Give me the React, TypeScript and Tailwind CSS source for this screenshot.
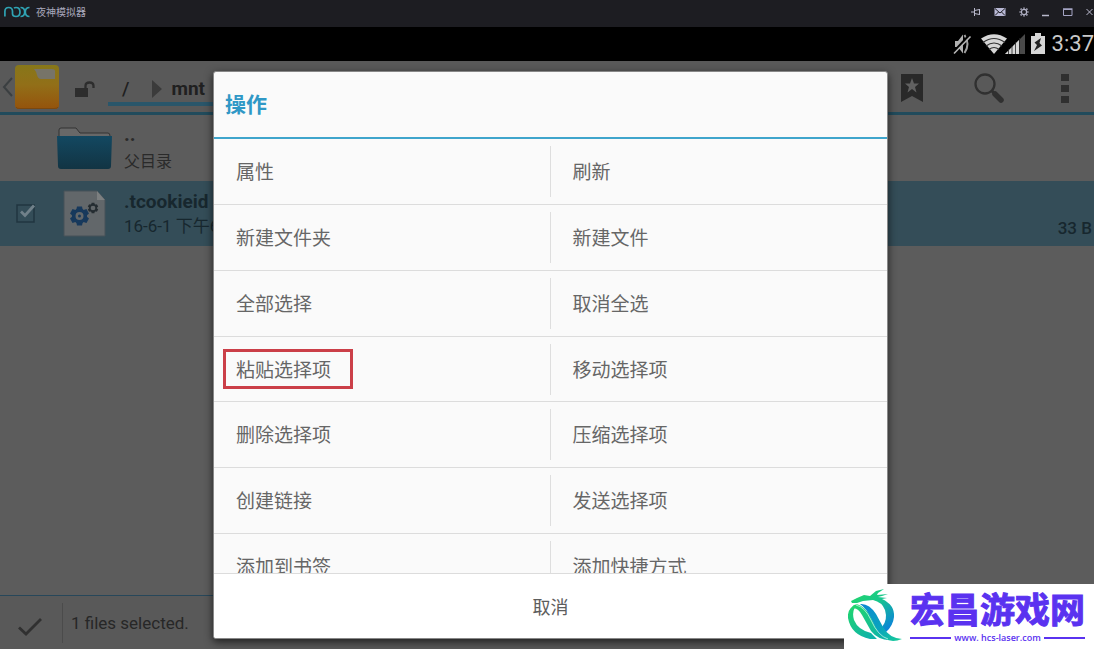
import React from "react";

const actions: [string, string][] = [
  ["属性", "刷新"],
  ["新建文件夹", "新建文件"],
  ["全部选择", "取消全选"],
  ["粘贴选择项", "移动选择项"],
  ["删除选择项", "压缩选择项"],
  ["创建链接", "发送选择项"],
  ["添加到书签", "添加快捷方式"],
];

const HIGHLIGHTED = "粘贴选择项";

function NoxLogo() {
  return (
    <svg viewBox="0 0 26 12" className="h-3 w-[26px]" fill="none" stroke="#2fa3b3" strokeWidth="1.7">
      <path d="M0.900 10.500V5.500Q0.900 1.500 4.700 1.500T8.500 5.500V8Q8.700 10.500 12 10.500Q16 10.500 16 6T12 1.500Q10.800 1.500 10 2.200" />
      <path d="M16.500 1.500Q20.700 1.500 20.700 6T16.500 10.500M25.500 1.500Q21.300 1.500 21.300 6T25.500 10.500" />
    </svg>
  );
}

function PinIcon() {
  return (
    <svg viewBox="0 0 10 10" className="size-[10px]" fill="none" stroke="#b9b9cc">
      <path d="M0 5H3.500M3.500 1V9M3.500 3.500L8.500 2.500M3.500 6.500L8.500 7.500M8.500 2V8" />
    </svg>
  );
}

function MailIcon() {
  return (
    <svg viewBox="0 0 12 10" className="h-[10px] w-3">
      <path d="M0.500 1H11.500V9H0.500Z" fill="#b9b9d6" />
      <path d="M1 1.500L6 6L11 1.500M1 8.500L4.500 5M11 8.500L7.500 5" fill="none" stroke="#1d1d22" />
    </svg>
  );
}

function SunGearIcon() {
  return (
    <svg viewBox="0 0 10 10" className="size-[10px]" fill="none" stroke="#b4b4c8">
      <circle cx="5" cy="5" r="2.600" strokeWidth="1.200" />
      <path d="M5 0.500V1.700M5 8.300V9.500M0.500 5H1.700M8.300 5H9.500M1.600 1.600L2.600 2.600M7.400 7.400L8.400 8.400M8.400 1.600L7.400 2.600M2.600 7.400L1.600 8.400" strokeWidth="1.500" />
    </svg>
  );
}

function TitleBar() {
  return (
    <header className="flex h-[27px] shrink-0 items-center justify-between bg-[#1d1d22] pb-[3px] pl-1">
      <div className="flex items-center gap-[6px]">
        <NoxLogo />
        <span className="text-[10px] leading-3 text-[#a9a9bd]">夜神模拟器</span>
      </div>
      <div className="flex shrink-0 items-center gap-[13px]">
        <button aria-label="置顶"><PinIcon /></button>
        <button aria-label="消息"><MailIcon /></button>
        <button aria-label="设置"><SunGearIcon /></button>
        <button aria-label="最小化">
          <svg viewBox="0 0 8 10" className="h-[10px] w-2"><path d="M0 8.500H7" stroke="#b9b9cc" strokeWidth="1.500" /></svg>
        </button>
        <button aria-label="最大化">
          <svg viewBox="0 0 10 10" className="size-[10px]" fill="none" stroke="#a5a5c4"><path d="M0.500 2.500H9V8.500H0.500Z" /><path d="M0 2H9.500" strokeWidth="1.500" /></svg>
        </button>
        <button aria-label="关闭">
          <svg viewBox="0 0 8 10" className="h-[10px] w-2" stroke="#b9b9cc"><path d="M0.500 2L6.500 8M6.500 2L0.500 8" /></svg>
        </button>
      </div>
    </header>
  );
}

function StatusBar() {
  return (
    <div className="flex h-[34px] shrink-0 items-center justify-end bg-black">
      <svg viewBox="0 0 20 22" className="mr-[9px] h-[22px] w-5" fill="#b0b0b0">
        <path d="M3 8H6L11 1.500V20.500L6 14H3Z" />
        <path d="M12.500 2Q18.500 11 12.500 20" fill="none" stroke="#a0a0a0" strokeWidth="2" />
        <path d="M17 2.500L1 19.500" stroke="#000" strokeWidth="2.500" />
        <path d="M18.500 3.500L2 20.500" stroke="#b5b5b5" strokeWidth="1.600" />
      </svg>
      <svg viewBox="0 0 44 22" className="h-[22px] w-11">
        <path d="M0 5.500Q13 -3 26 5.500L13 21Z" fill="#d6d6d6" />
        <path d="M2 9.500Q13 1.500 24 9.500M5 13Q13 7 21 13M8 16.500Q13 12.500 18 16.500" fill="none" stroke="#333" strokeWidth="1.200" />
        <path d="M24 21L44 1V21Z" fill="#4a4a4a" />
        <path d="M24 21L38 7V21Z" fill="#d6d6d6" />
        <path d="M27.500 16V21M31 13V21M34.500 9V21M38.500 5V21" stroke="#222" strokeWidth="0.800" />
      </svg>
      <svg viewBox="0 0 14 22" className="ml-[6px] h-[22px] w-[14px]">
        <path d="M4 0H10V3H14V21H0V3H4Z" fill="#d6d6d6" />
        <path d="M10 5L3.500 9.500L6 12L3 18L11 12.500L8.500 10Z" fill="#222" />
      </svg>
      <time className="ml-[7px] font-[Roboto,sans-serif] text-[22px] leading-7 text-[#c9c9c9]">3:37</time>
    </div>
  );
}

function AppIcon() {
  return (
    <svg viewBox="0 0 44 44" className="ml-px size-11">
      <defs>
        <linearGradient id="appFolder" x1="0" y1="0" x2="0" y2="1">
          <stop offset="0" stopColor="#877719" />
          <stop offset="0.450" stopColor="#926f18" />
          <stop offset="1" stopColor="#95530c" />
        </linearGradient>
      </defs>
      <rect width="44" height="44" rx="4" fill="url(#appFolder)" />
      <path d="M19 4H37Q40 4 40 6V14H26Q23 14 22 10Q21 6 19 4Z" fill="#777468" />
      <path d="M1 42Q1 43.500 5 43.500H39Q43 43.500 43 42" fill="none" stroke="#7b480f" />
    </svg>
  );
}

function ActionBar() {
  return (
    <nav className="flex h-[54px] shrink-0 items-center justify-between border-b-3 border-[#214b5c] bg-[#595959]">
      <div className="flex h-full items-center">
        <button aria-label="返回">
          <svg viewBox="0 0 14 20" className="h-5 w-[14px]" fill="none" stroke="#3b3f41" strokeWidth="2"><path d="M12 1L4 10L12 19" /></svg>
        </button>
        <AppIcon />
        <button aria-label="解锁" className="ml-[15px] pt-1">
          <svg viewBox="0 0 22 18" className="h-[18px] w-[22px]" fill="none">
            <path d="M1 8H14V17H1Z" fill="#2d2d2d" />
            <path d="M11.500 9V6Q11.500 2.500 15.500 2.500T19.500 6V8" stroke="#2d2d2d" strokeWidth="2.300" />
          </svg>
        </button>
        <div className="ml-3 flex h-full items-end pb-[6px] font-[Roboto,sans-serif] text-[19px] font-medium leading-6 text-[#202020]">
          <div className="flex h-9 items-center border-b-4 border-[#2a566a] pt-[5px] pl-[14px]">
            <a href="#root">/</a>
            <svg viewBox="0 0 10 18" className="ml-[23px] h-[18px] w-[10px]"><path d="M0 0L10 9L0 18Z" fill="#3b3b3b" /></svg>
            <a href="#mnt" className="ml-[9px] pr-4 font-bold">mnt</a>
          </div>
        </div>
      </div>
      <div className="flex items-center pt-[3px] pr-[25px]">
        <button aria-label="书签">
          <svg viewBox="0 0 22 28" className="h-7 w-[22px]"><path d="M0 0H22V28L11 22L0 28Z" fill="#292929" /><path d="M11 4L13 9.500H18L14 13L15.500 18.500L11 15L6.500 18.500L8 13L4 9.500H9Z" fill="#616161" /></svg>
        </button>
        <button aria-label="搜索" className="ml-[51px]">
          <svg viewBox="0 0 31 31" className="size-[31px]" fill="none" stroke="#303030"><circle cx="11" cy="11" r="9.500" strokeWidth="2.300" /><path d="M17.500 17.500L21 21" strokeWidth="3" /><path d="M21 21L27 27" strokeWidth="5.500" strokeLinecap="round" /></svg>
        </button>
        <button aria-label="更多" className="ml-[56px]">
          <svg viewBox="0 0 8 30" className="h-[30px] w-2" fill="#303030"><path d="M0 1H8V8H0ZM0 12H8V19H0ZM0 23H8V30H0Z" /></svg>
        </button>
      </div>
    </nav>
  );
}

function Gear({ x, y, scale, color, ring }: { x: number; y: number; scale: number; color: string; ring: number }) {
  const teeth = [0, 60, 120, 180, 240, 300];
  return (
    <g transform={`translate(${x} ${y}) scale(${scale})`}>
      {teeth.map((angle) => (
        <path key={angle} d="M-2.500 -9.500H2.500L3.500 -5H-3.500Z" fill={color} transform={`rotate(${angle})`} />
      ))}
      <circle r="5.800" fill="none" stroke={color} strokeWidth={ring} />
    </g>
  );
}

function FileList() {
  return (
    <main className="flex-1 bg-[#5c5c5c]">
      <a href="#parent" className="flex h-[66px] items-center pl-14">
        <svg viewBox="0 0 58 44" className="h-11 w-[58px]">
          <defs>
            <linearGradient id="folderBlue" x1="0" y1="0" x2="0" y2="1">
              <stop offset="0" stopColor="#134861" /><stop offset="1" stopColor="#123443" />
            </linearGradient>
          </defs>
          <path d="M3 10V4Q3 2 5 2H20L24 7H52Q54 7 54 10" fill="#686868" stroke="#333" />
          <path d="M1 10H56L55 40Q55 43 52 43H5Q2 43 2 40Z" fill="url(#folderBlue)" />
        </svg>
        <div className="ml-[10px] text-[#2a2a2a]">
          <div className="h-5 text-[20px] font-bold leading-5 font-[Roboto,sans-serif]">..</div>
          <div className="pt-1 text-[16px] leading-6">父目录</div>
        </div>
      </a>
      <div className="flex h-[65px] items-center justify-between bg-[#344d58]">
        <div className="flex items-center">
          <label className="ml-4 flex size-5">
            <input type="checkbox" defaultChecked aria-label=".tcookieid" className="peer sr-only" />
            <svg viewBox="0 0 20 20" className="size-5" fill="none"><path d="M1 1H18V18H1Z" stroke="#203640" strokeWidth="1.500" /><path d="M5 7.500L9 11.500L18 1.500" stroke="#71818a" strokeWidth="2.800" /></svg>
          </label>
          <svg viewBox="0 0 44 48" className="ml-[27px] h-12 w-11">
            <path d="M1 1H34L42 10V46H1Z" fill="#62676a" stroke="#465259" />
            <path d="M34 1V10H42Z" fill="#7c7f80" />
            <Gear x={16.5} y={26} scale={1} color="#17395c" ring={3.6} />
            <Gear x={30} y={18} scale={0.55} color="#252d32" ring={3} />
            <circle cx="16.500" cy="26" r="1.500" fill="#17395c" />
          </svg>
          <div className="ml-[17px] text-[#17272e]">
            <div className="text-[19px] font-bold leading-6 font-[Roboto,sans-serif]">.tcookieid</div>
            <div className="text-[17px] leading-6 whitespace-nowrap font-[Roboto,'Noto_Sans_CJK_SC',sans-serif]">16-6-1 下午6</div>
          </div>
        </div>
        <span className="pt-[29px] pr-[2px] text-[17px] leading-6 font-medium text-[#17272e] font-[Roboto,sans-serif]">33 B</span>
      </div>
    </main>
  );
}

function SelectionBar() {
  return (
    <footer className="flex h-[54px] shrink-0 items-center border-t border-[#27475a] bg-[#595959]">
      <button aria-label="完成" className="flex h-10 w-[63px] items-center justify-center border-r border-[#4b4b4b] pt-2 pr-[2px]">
        <svg viewBox="0 0 26 20" className="h-5 w-[26px]" fill="none" stroke="#303030" strokeWidth="2.800"><path d="M2 10.500L9 17L24 2" /></svg>
      </button>
      <span className="ml-2 text-[17px] leading-6 text-[#272727] font-[Roboto,sans-serif]">1 files selected.</span>
    </footer>
  );
}

function ActionDialog() {
  return (
    <section role="dialog" aria-label="操作" className="flex h-full w-[675px] flex-col overflow-hidden rounded-[3px] border border-[#888] bg-[#fafafa] shadow-[0_3px_8px_rgba(0,0,0,0.65)]">
      <h1 className="flex h-[67px] shrink-0 items-center border-b-2 border-[#3fa5cc] pb-[3px] pl-[11px] text-[21px] font-bold leading-8 text-[#3098c6]">操作</h1>
      <div className="min-h-0 flex-1 overflow-hidden">
        {actions.map(([left, right], index) => (
          <div key={left} className={`flex items-center border-b border-[#dcdcdc] ${index % 4 === 3 ? "h-[65px]" : "h-[66px]"}`}>
            <div className="flex h-[51px] w-1/2 items-center border-r border-[#dedede] pb-px pl-[9px]">
              <button className={`h-10 w-[130px] border-3 pl-[10px] text-left text-[19px] leading-7 text-[#666] ${left === HIGHLIGHTED ? "border-[#cb3f48]" : "border-transparent"}`}>{left}</button>
            </div>
            <button className="h-[51px] w-1/2 pb-px pl-[22px] text-left text-[19px] leading-7 text-[#666]">{right}</button>
          </div>
        ))}
      </div>
      <button className="h-[65px] shrink-0 border-t border-[#dcdcdc] bg-white text-[18px] leading-7 text-[#5d5d5d]">取消</button>
    </section>
  );
}

function DragonLogo() {
  return (
    <svg viewBox="0 0 56 56" className="h-14 w-14 shrink-0">
      <defs>
        <linearGradient id="dragonHead" x1="0" y1="0" x2="0.900" y2="1">
          <stop offset="0" stopColor="#25d866" /><stop offset="0.450" stopColor="#18c88a" /><stop offset="1" stopColor="#0a7ee0" />
        </linearGradient>
        <linearGradient id="dragonRing" x1="0" y1="0" x2="0.700" y2="1">
          <stop offset="0" stopColor="#22d86a" /><stop offset="1" stopColor="#0fb3a8" />
        </linearGradient>
        <linearGradient id="dragonTail" x1="0" y1="0" x2="1" y2="1">
          <stop offset="0" stopColor="#0a86d4" /><stop offset="0.600" stopColor="#0aa6bc" /><stop offset="1" stopColor="#19cf95" />
        </linearGradient>
      </defs>
      <path d="M3 12L9 9L16 6L22 7L28 2L36 0L30 4L29 6L40 5L34 7L30 8L39 9L34 10Q47 16 46 28Q45 37 38 43L34 38Q40 31 37 21Q34 13 25 11L15 12L9 14L4 14Z" fill="url(#dragonHead)" />
      <path d="M10 15Q-1 18 0 29Q3 46 22 50L29 50L23 44Q10 41 6 31Q3 21 10 15Z" fill="url(#dragonRing)" />
      <path d="M3 20Q6 13 13 17Q21 22 26 34Q31 46 42 51Q30 51 23 42L14 26Q9 17 3 20Z" fill="url(#dragonRing)" />
      <path d="M12 15Q21 14 28 25L35 38Q41 49 54 50Q39 56 30 43L23 29Q18 19 12 15Z" fill="url(#dragonTail)" />
      <path d="M8 16Q17 18 23 31Q30 47 40 50" fill="none" stroke="#d9fff2" strokeWidth="0.700" />
    </svg>
  );
}

function SiteBadge() {
  return (
    <aside className="absolute right-0 bottom-0 flex h-[65px] w-[250px] items-center bg-white pl-1 text-[#5a32f0]">
      <DragonLogo />
      <div className="ml-[6px] flex flex-1 flex-col pr-[10px]">
        <strong className="h-[38px] whitespace-nowrap text-[35px] font-bold leading-[36px] [-webkit-text-stroke:1px_#5a32f0] [stroke-linejoin:round]">宏昌游戏网</strong>
        <div className="flex items-center gap-[3px] pt-1">
          <span className="h-[2px] flex-1 bg-[#5a32f0]" />
          <a href="#site" className="text-[9px] font-semibold leading-3 font-['Open_Sans',sans-serif]">www. hcs-laser.com</a>
          <span className="h-[2px] flex-1 bg-[#5a32f0]" />
        </div>
      </div>
    </aside>
  );
}

export default function App() {
  return (
    <div className="relative flex h-screen min-h-[400px] flex-col overflow-hidden bg-[#5c5c5c] font-['Noto_Sans_CJK_SC',sans-serif]">
      <TitleBar />
      <StatusBar />
      <ActionBar />
      <FileList />
      <SelectionBar />
      <div className="absolute inset-x-0 top-[71px] bottom-[10px] flex justify-center pl-[7px]">
        <ActionDialog />
      </div>
      <SiteBadge />
    </div>
  );
}
